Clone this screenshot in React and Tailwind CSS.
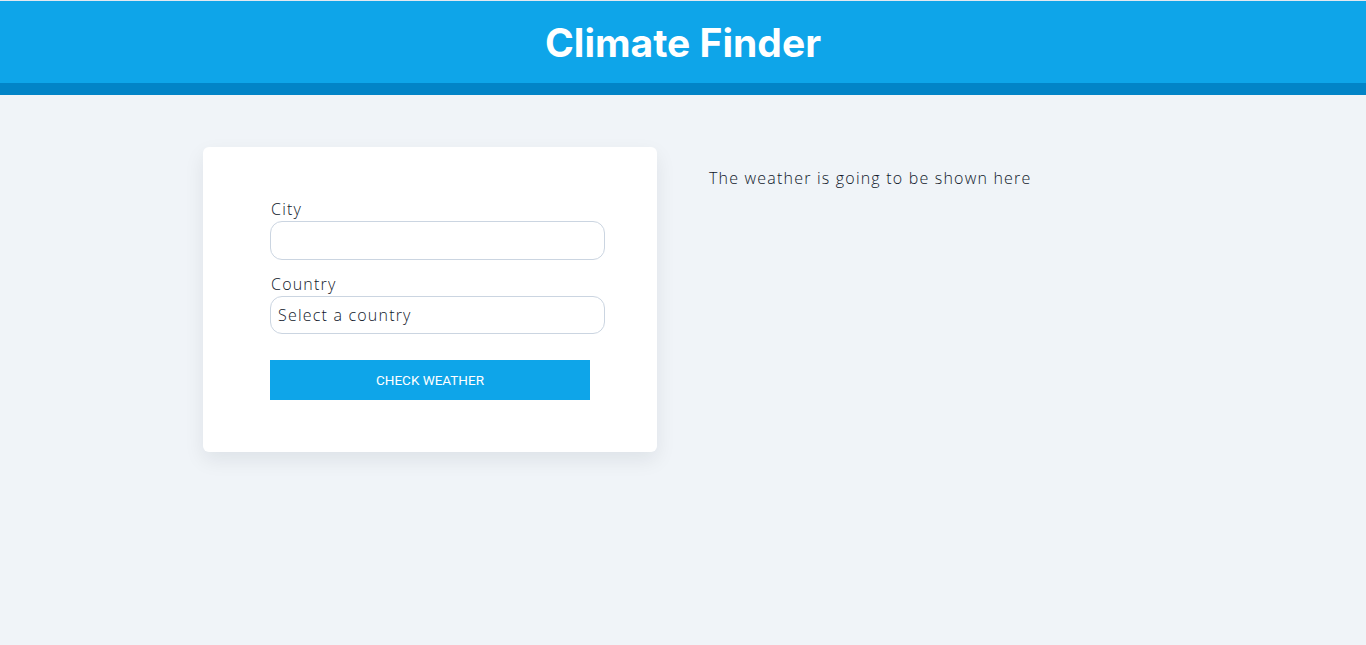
import React from "react";

export default function App() {
  const body = { fontFamily: '"Open Sans", "DejaVu Sans", sans-serif' };
  return (
    <div className="min-h-[645px] bg-[#f0f4f8]" style={body}>
      <header className="border-t border-[#e2e8f0]">
        <div className="bg-[#0ea5e9] h-[82px] flex items-center justify-center">
          <h1
            className="text-white text-[39px] font-bold leading-none"
            style={{ fontFamily: 'Inter, "Liberation Sans", sans-serif' }}
          >
            Climate Finder
          </h1>
        </div>
        <div className="bg-[#0284c7] h-[12px]" />
      </header>
      <main className="flex gap-[52px] pl-[203px] pt-[52px] font-light">
        <div className="w-[454px] h-[305px] bg-white rounded-[6px] shadow-[0_8px_20px_rgba(15,23,42,0.08)] pl-[67px] pr-[52px] pt-[51px]">
          <label className="block pl-[1px] text-[16px] leading-[22px] text-[#0f172a] tracking-[0.075em] mb-[1px]">City</label>
          <input className="block w-[335px] h-[39px] rounded-[12px] border border-[#cbd5e1] bg-white outline-none" />
          <label className="block pl-[1px] mt-[13px] text-[16px] leading-[22px] text-[#0f172a] tracking-[0.075em] mb-[1px]">Country</label>
          <div className="w-[335px] h-[38px] rounded-[12px] border border-[#cbd5e1] bg-white flex items-center pl-[7px] text-[16px] text-[#0f172a] tracking-[0.075em]">
            Select a country
          </div>
          <button
            className="mt-[26px] w-[320px] h-[40px] bg-[#0ea5e9] text-white text-[13.5px] font-normal flex items-center justify-center"
            style={{ fontFamily: 'Roboto, "Liberation Sans", sans-serif' }}
          >
            CHECK WEATHER
          </button>
        </div>
        <div className="pt-[21px] text-[16px] text-[#0f172a] tracking-[0.075em] leading-[20px]">
          The weather is going to be shown here
        </div>
      </main>
    </div>
  );
}
